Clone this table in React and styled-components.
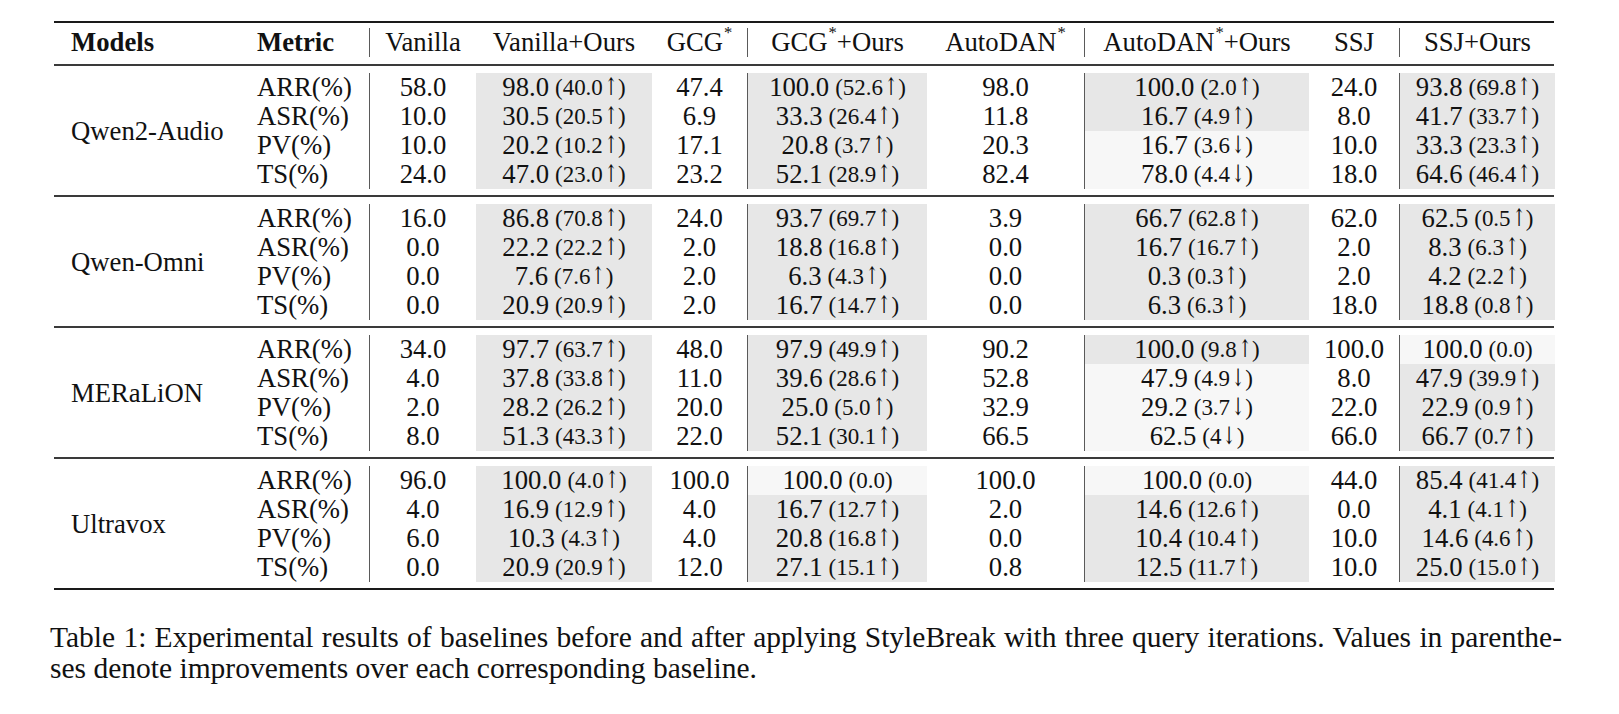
import React from 'react'
import styled, { createGlobalStyle } from 'styled-components'

const GlobalStyle = createGlobalStyle`
  body {
    margin: 0;
    background: #fff;
  }
`

const COLS = '186px 129px 107px 176px 95px 180px 157px 225px 90px 156px'

const SHADES = {
    dark: '#e7e7e7',
    light: '#f7f7f7',
}

const Page = styled.div`
    padding: 21px 0 40px 54px;
    font-family: "Liberation Serif", "Times New Roman", serif;
    color: #111;
`

const Table = styled.div`
    width: 1500px;
    border-top: 2.5px solid #1a1a1a;
    border-bottom: 2.5px solid #1a1a1a;
`

const Section = styled.div`
    display: grid;
    grid-template-columns: ${COLS};
    grid-template-rows: repeat(${p => p.$rows}, 29px);
    padding: ${p => (p.$head ? '5px 0 7px' : '7px 0 6px')};
    border-top: ${p => (p.$first ? 'none' : '2px solid #3a3a3a')};
`

const Cell = styled.div`
    display: flex;
    align-items: center;
    justify-content: ${p => (p.$left ? 'flex-start' : 'center')};
    padding-left: ${p => (p.$left ? '17px' : '0')};
    font-size: 26.7px;
    line-height: 29px;
    font-weight: ${p => (p.$bold ? 700 : 400)};
    white-space: nowrap;
    border-left: ${p => (p.$sep ? '1.5px solid #5a5a5a' : 'none')};
    background: ${p => SHADES[p.$shade] || 'transparent'};
`

const ModelCell = styled(Cell)`
    grid-row: 1 / span 4;
`

const Delta = styled.span`
    font-size: 0.86em;
    margin-left: 6px;
`

const Arrow = styled.span`
    display: inline-block;
    font-family: "DejaVu Serif", serif;
    font-size: 1.05em;
    line-height: 0;
    transform: scaleX(0.65);
    margin: 0 -3px 0 -2px;
`

const Star = styled.span`
    font-size: 0.62em;
    line-height: 0;
    position: relative;
    top: -0.55em;
    margin-left: 1px;
`

const Caption = styled.div`
    margin: 32px 0 0 -4px;
    width: 1512px;
    font-family: "Liberation Serif", "Times New Roman", serif;
    font-size: 29.5px;
    line-height: 31px;
`

const CaptionLine = styled.div`
    text-align: ${p => (p.$justify ? 'justify' : 'left')};
    text-align-last: ${p => (p.$justify ? 'justify' : 'auto')};
`

// columns after the metric: plain / +Ours pairs, with a rule before some of them
const HEADERS = [
    { label: 'Vanilla', sep: true },
    { label: 'Vanilla+Ours' },
    { label: 'GCG', star: true },
    { label: 'GCG', star: true, ours: true, sep: true },
    { label: 'AutoDAN', star: true },
    { label: 'AutoDAN', star: true, ours: true, sep: true },
    { label: 'SSJ' },
    { label: 'SSJ+Ours', sep: true },
]

const METRICS = ['ARR(%)', 'ASR(%)', 'PV(%)', 'TS(%)']

const models = [
    {
        name: 'Qwen2-Audio',
        rows: [
            ['58.0', '98.0 40.0↑', '47.4', '100.0 52.6↑', '98.0', '100.0 2.0↑', '24.0', '93.8 69.8↑'],
            ['10.0', '30.5 20.5↑', '6.9', '33.3 26.4↑', '11.8', '16.7 4.9↑', '8.0', '41.7 33.7↑'],
            ['10.0', '20.2 10.2↑', '17.1', '20.8 3.7↑', '20.3', '16.7 3.6↓', '10.0', '33.3 23.3↑'],
            ['24.0', '47.0 23.0↑', '23.2', '52.1 28.9↑', '82.4', '78.0 4.4↓', '18.0', '64.6 46.4↑'],
        ],
    },
    {
        name: 'Qwen-Omni',
        rows: [
            ['16.0', '86.8 70.8↑', '24.0', '93.7 69.7↑', '3.9', '66.7 62.8↑', '62.0', '62.5 0.5↑'],
            ['0.0', '22.2 22.2↑', '2.0', '18.8 16.8↑', '0.0', '16.7 16.7↑', '2.0', '8.3 6.3↑'],
            ['0.0', '7.6 7.6↑', '2.0', '6.3 4.3↑', '0.0', '0.3 0.3↑', '2.0', '4.2 2.2↑'],
            ['0.0', '20.9 20.9↑', '2.0', '16.7 14.7↑', '0.0', '6.3 6.3↑', '18.0', '18.8 0.8↑'],
        ],
    },
    {
        name: 'MERaLiON',
        rows: [
            ['34.0', '97.7 63.7↑', '48.0', '97.9 49.9↑', '90.2', '100.0 9.8↑', '100.0', '100.0 0.0'],
            ['4.0', '37.8 33.8↑', '11.0', '39.6 28.6↑', '52.8', '47.9 4.9↓', '8.0', '47.9 39.9↑'],
            ['2.0', '28.2 26.2↑', '20.0', '25.0 5.0↑', '32.9', '29.2 3.7↓', '22.0', '22.9 0.9↑'],
            ['8.0', '51.3 43.3↑', '22.0', '52.1 30.1↑', '66.5', '62.5 4↓', '66.0', '66.7 0.7↑'],
        ],
    },
    {
        name: 'Ultravox',
        rows: [
            ['96.0', '100.0 4.0↑', '100.0', '100.0 0.0', '100.0', '100.0 0.0', '44.0', '85.4 41.4↑'],
            ['4.0', '16.9 12.9↑', '4.0', '16.7 12.7↑', '2.0', '14.6 12.6↑', '0.0', '4.1 4.1↑'],
            ['6.0', '10.3 4.3↑', '4.0', '20.8 16.8↑', '0.0', '10.4 10.4↑', '10.0', '14.6 4.6↑'],
            ['0.0', '20.9 20.9↑', '12.0', '27.1 15.1↑', '0.8', '12.5 11.7↑', '10.0', '25.0 15.0↑'],
        ],
    },
]

function HeaderLabel({ h }) {
    return (
        <>
            {h.label}
            {h.star && <Star>*</Star>}
            {h.ours && '+Ours'}
        </>
    )
}

function ValueCell({ value, sep }) {
    const [main, delta] = value.split(' ')
    if (!delta) return <Cell $sep={sep}>{main}</Cell>
    // improvements get the darker shade, drops and zero change the light one
    const arrow = delta.match(/[↑↓]/)
    const shade = arrow && arrow[0] === '↑' ? 'dark' : 'light'
    return (
        <Cell $sep={sep} $shade={shade}>
            {main}
            <Delta>
                ({delta.replace(/[↑↓]/, '')}
                {arrow && <Arrow>{arrow[0]}</Arrow>})
            </Delta>
        </Cell>
    )
}

export default function App() {
    return (
        <Page>
            <GlobalStyle />
            <Table>
                <Section $rows={1} $head $first>
                    <Cell $left $bold>Models</Cell>
                    <Cell $left $bold>Metric</Cell>
                    {HEADERS.map((h, i) => (
                        <Cell key={i} $sep={h.sep}>
                            <HeaderLabel h={h} />
                        </Cell>
                    ))}
                </Section>
                {models.map(model => (
                    <Section key={model.name} $rows={4}>
                        <ModelCell $left>{model.name}</ModelCell>
                        {model.rows.map((row, r) => (
                            <React.Fragment key={r}>
                                <Cell $left>{METRICS[r]}</Cell>
                                {row.map((v, c) => (
                                    <ValueCell key={c} value={v} sep={HEADERS[c].sep} />
                                ))}
                            </React.Fragment>
                        ))}
                    </Section>
                ))}
            </Table>
            <Caption>
                <CaptionLine $justify>
                    Table 1: Experimental results of baselines before and after applying StyleBreak with three query iterations. Values in parenthe-
                </CaptionLine>
                <CaptionLine>ses denote improvements over each corresponding baseline.</CaptionLine>
            </Caption>
        </Page>
    )
}
